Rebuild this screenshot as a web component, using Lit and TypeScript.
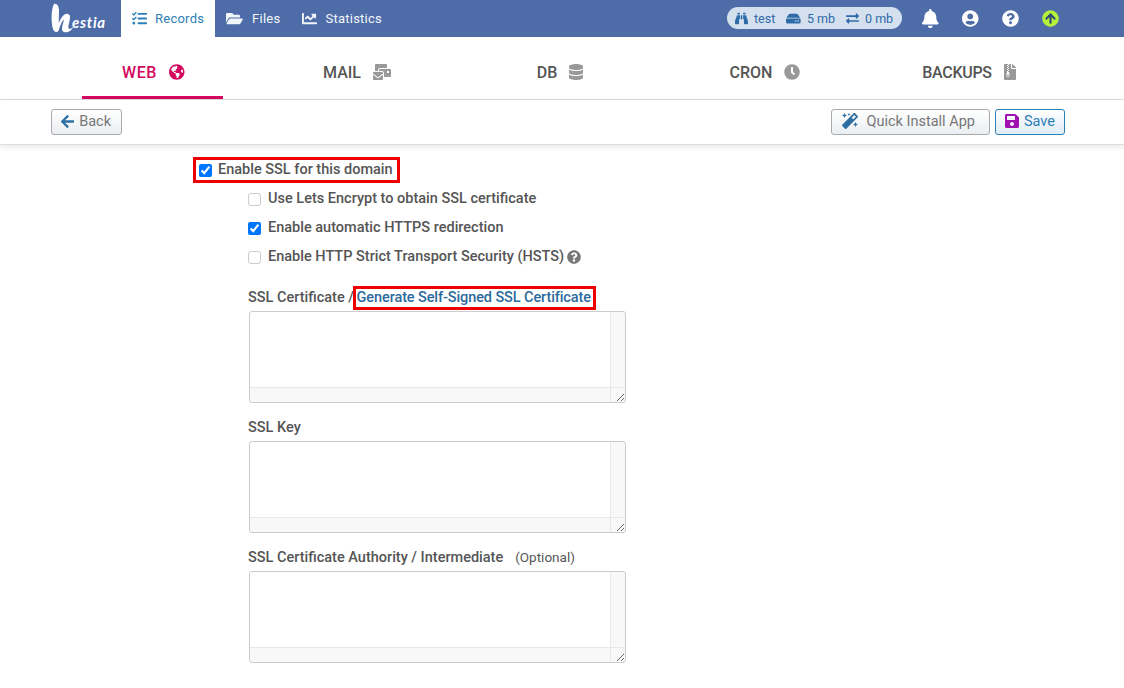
import { LitElement, html, css, svg } from "lit";
import { customElement } from "lit/decorators.js";

const P: Record<string, [number, string]> = {
  tasks: [512, "M139.61 35.5a12 12 0 0 0-17 0L58.93 98.81l-22.7-22.12a12 12 0 0 0-17 0L3.53 92.41a12 12 0 0 0 0 17l47.59 47.4a12.78 12.78 0 0 0 17.61 0l15.59-15.62L156.52 69a12.09 12.09 0 0 0 .09-17zm0 159.19a12 12 0 0 0-17 0l-63.68 63.72-22.7-22.1a12 12 0 0 0-17 0L3.53 252a12 12 0 0 0 0 17L51 316.5a12.77 12.77 0 0 0 17.6 0l15.7-15.69 72.2-72.22a12 12 0 0 0 .09-16.9zM64 368c-26.49 0-48.59 21.5-48.59 48S37.53 464 64 464a48 48 0 0 0 0-96zm432 16H208a16 16 0 0 0-16 16v32a16 16 0 0 0 16 16h288a16 16 0 0 0 16-16v-32a16 16 0 0 0-16-16zm0-320H208a16 16 0 0 0-16 16v32a16 16 0 0 0 16 16h288a16 16 0 0 0 16-16V80a16 16 0 0 0-16-16zm0 160H208a16 16 0 0 0-16 16v32a16 16 0 0 0 16 16h288a16 16 0 0 0 16-16v-32a16 16 0 0 0-16-16z"],
  folder: [576, "M572.694 292.093L500.27 416.248A63.997 63.997 0 0 1 444.989 448H45.025c-18.523 0-30.064-20.093-20.731-36.093l72.424-124.155A64 64 0 0 1 152 256h399.964c18.523 0 30.064 20.093 20.73 36.093zM152 224h328v-48c0-26.51-21.49-48-48-48H272l-64-64H48C21.49 64 0 85.49 0 112v278.046l69.077-118.418C86.214 242.25 117.989 224 152 224z"],
  chart: [512, "M496 384H64V80c0-8.84-7.16-16-16-16H16C7.16 64 0 71.16 0 80v336c0 17.67 14.33 32 32 32h464c8.84 0 16-7.16 16-16v-32c0-8.84-7.16-16-16-16zM464 96H345.94c-21.38 0-32.09 25.85-16.97 40.97l32.4 32.4L288 242.75l-73.37-73.37c-12.5-12.5-32.76-12.5-45.25 0l-68.69 68.69c-6.25 6.25-6.25 16.38 0 22.63l22.62 22.62c6.25 6.25 16.38 6.25 22.63 0L192 237.25l73.37 73.37c12.5 12.5 32.76 12.5 45.25 0l96-96 32.4 32.4c15.12 15.12 40.97 4.41 40.97-16.97V112c.01-8.84-7.15-16-16.01-16z"],
  binoculars: [512, "M416 48c0-8.84-7.16-16-16-16h-64c-8.84 0-16 7.16-16 16v48h96V48zM63.91 159.99C61.4 253.84 3.46 274.22 0 404v44c0 17.67 14.33 32 32 32h96c17.67 0 32-14.33 32-32V288h32V128H95.84c-17.63 0-31.45 14.37-31.93 31.99zm384.18 0c-.48-17.62-14.3-31.99-31.93-31.99H320v160h32v160c0 17.67 14.33 32 32 32h96c17.67 0 32-14.33 32-32v-44c-3.46-129.78-61.4-150.16-63.91-244.01zM176 32h-64c-8.84 0-16 7.16-16 16v48h96V48c0-8.84-7.16-16-16-16zm48 256h64V128h-64v160z"],
  hdd: [576, "M576 304v96c0 26.51-21.49 48-48 48H48c-26.51 0-48-21.49-48-48v-96c0-26.51 21.49-48 48-48h480c26.51 0 48 21.49 48 48zm-48-80a79.557 79.557 0 0 1 30.777 6.165L462.25 85.374A48.003 48.003 0 0 0 422.311 64H153.689a48 48 0 0 0-39.938 21.374L17.223 230.165A79.557 79.557 0 0 1 48 224h480zm-48 96c-17.673 0-32 14.327-32 32s14.327 32 32 32 32-14.327 32-32-14.327-32-32-32zm-96 0c-17.673 0-32 14.327-32 32s14.327 32 32 32 32-14.327 32-32-14.327-32-32-32z"],
  exchange: [512, "M0 168v-16c0-13.255 10.745-24 24-24h360V80c0-21.367 25.899-32.042 40.971-16.971l80 80c9.372 9.373 9.372 24.569 0 33.941l-80 80C409.956 272.014 384 261.456 384 240v-48H24c-13.255 0-24-10.745-24-24zm488 152H128v-48c0-21.314-25.862-32.08-40.971-16.971l-80 80c-9.372 9.373-9.372 24.569 0 33.941l80 80C102.057 463.997 128 453.437 128 432v-48h360c13.255 0 24-10.745 24-24v-16c0-13.255-10.745-24-24-24z"],
  bell: [448, "M224 512c35.32 0 63.97-28.65 63.97-64H160.03c0 35.35 28.65 64 63.97 64zm215.39-149.71c-19.32-20.76-55.47-51.99-55.47-154.29 0-77.7-54.48-139.9-127.94-155.16V32c0-17.67-14.32-32-31.98-32s-31.98 14.33-31.98 32v20.84C118.56 68.1 64.08 130.3 64.08 208c0 102.3-36.15 133.53-55.47 154.29-6 6.45-8.66 14.16-8.61 21.71.11 16.4 12.98 32 32.1 32h383.8c19.12 0 32-15.6 32.1-32 .05-7.55-2.61-15.27-8.61-21.71z"],
  user: [496, "M248 8C111 8 0 119 0 256s111 248 248 248 248-111 248-248S385 8 248 8zm0 96c48.6 0 88 39.4 88 88s-39.4 88-88 88-88-39.4-88-88 39.4-88 88-88zm0 344c-58.7 0-111.3-26.6-146.5-68.2 18.8-35.4 55.6-59.8 98.5-59.8 2.4 0 4.8.4 7.1 1.1 13 4.2 26.6 6.9 40.9 6.9 14.3 0 28-2.7 40.9-6.9 2.3-.7 4.7-1.1 7.1-1.1 42.9 0 79.7 24.4 98.5 59.8C359.3 421.4 306.7 448 248 448z"],
  help: [512, "M504 256c0 136.997-111.043 248-248 248S8 392.997 8 256C8 119.083 119.043 8 256 8s248 111.083 248 248zM262.655 90c-54.497 0-89.255 22.957-116.549 63.758-3.536 5.286-2.353 12.415 2.715 16.258l34.699 26.31c5.205 3.947 12.621 3.008 16.665-2.122 17.864-22.658 30.113-35.797 57.303-35.797 20.429 0 45.698 13.148 45.698 32.958 0 14.976-12.363 22.667-32.534 33.976C247.128 238.528 216 254.941 216 296v4c0 6.627 5.373 12 12 12h56c6.627 0 12-5.373 12-12v-1.333c0-28.462 83.186-29.647 83.186-106.667 0-58.002-60.165-102-116.531-102zM256 338c-25.365 0-46 20.635-46 46 0 25.364 20.635 46 46 46s46-20.636 46-46c0-25.365-20.635-46-46-46z"],
  up: [512, "M8 256C8 119 119 8 256 8s248 111 248 248-111 248-248 248S8 393 8 256zm143.6 28.9l72.4-75.5V392c0 13.3 10.7 24 24 24h16c13.3 0 24-10.7 24-24V209.4l72.4 75.5c9.3 9.7 24.8 9.9 34.3.4l10.9-11c9.4-9.4 9.4-24.6 0-33.9L273 107.7c-9.4-9.4-24.6-9.4-33.9 0L106.3 240.4c-9.4 9.4-9.4 24.6 0 33.9l10.9 11c9.6 9.5 25.1 9.3 34.4-.4z"],
  globe: [496, "M248 8C111.03 8 0 119.03 0 256s111.03 248 248 248 248-111.03 248-248S384.97 8 248 8zm82.29 357.6c-3.9 3.88-7.99 7.95-11.31 11.28-2.99 3-5.1 6.7-6.17 10.71-1.51 5.66-2.73 11.38-4.77 16.87l-17.39 46.85c-13.76 3-28 4.69-42.65 4.69v-27.38c1.69-12.62-7.64-36.26-22.63-51.25-6-6-9.37-14.14-9.37-22.63v-32.01c0-11.64-6.27-22.34-16.46-27.97-14.37-7.95-34.81-19.06-48.81-26.11-11.48-5.78-22.1-13.14-31.65-21.75l-.8-.72a114.792 114.792 0 0 1-18.06-20.74c-9.38-13.77-24.66-36.42-34.59-51.14 20.47-45.5 57.36-82.04 103.2-101.89l24.01 12.01C203.48 89.74 216 82.01 216 70.11v-11.3c7.99-1.29 16.12-2.11 24.39-2.42l28.3 28.3c6.25 6.25 6.25 16.38 0 22.63L264 112l-10.34 10.34c-3.12 3.12-3.12 8.19 0 11.31l4.69 4.69c3.12 3.12 3.12 8.19 0 11.31l-8 8a8.008 8.008 0 0 1-5.66 2.34h-8.99c-2.08 0-4.08.81-5.58 2.27l-9.92 9.65a8.008 8.008 0 0 0-1.58 9.31l15.59 31.19c2.66 5.32-1.21 11.58-7.15 11.58h-5.64c-1.93 0-3.79-.7-5.24-1.96l-9.28-8.06a16.017 16.017 0 0 0-15.55-3.1l-31.17 10.39a11.95 11.95 0 0 0-8.17 11.34c0 4.53 2.56 8.66 6.61 10.69l11.08 5.54c9.41 4.71 19.79 7.16 30.31 7.16s22.59 27.29 32 32h66.75c8.49 0 16.62 3.37 22.63 9.37l13.69 13.69a30.503 30.503 0 0 1 8.93 21.57 46.536 46.536 0 0 1-13.72 32.98zM417 274.25c-5.79-1.45-10.84-5-14.15-9.97l-17.98-26.97a23.97 23.97 0 0 1 0-26.62l19.59-29.38c2.32-3.47 5.5-6.29 9.24-8.15l12.98-6.49C440.2 193.59 448 223.87 448 256c0 8.67-.74 17.16-1.82 25.54L417 274.25z"],
  mail: [576, "M160 448c-25.6 0-51.2-22.4-64-32-64-44.8-83.2-60.8-96-70.4V480c0 17.67 14.33 32 32 32h256c17.67 0 32-14.33 32-32V345.6c-12.8 9.6-32 25.6-96 70.4-12.8 9.6-38.4 32-64 32zm128-192H32c-17.67 0-32 14.33-32 32v16c25.6 19.2 22.4 19.2 115.2 86.4 9.6 6.4 28.8 25.6 44.8 25.6s35.2-19.2 44.8-22.4c92.8-67.2 89.6-67.2 115.2-86.4V288c0-17.67-14.33-32-32-32zm256-96H224c-17.67 0-32 14.33-32 32v32h96c33.21 0 60.59 25.42 63.71 57.82l.29-.22V416h192c17.67 0 32-14.33 32-32V192c0-17.67-14.33-32-32-32zm-32 128h-64v-64h64v64zm-352-96c0-35.29 28.71-64 64-64h224V32c0-17.67-14.33-32-32-32H96C78.33 0 64 14.33 64 32v192h96v-32z"],
  db: [448, "M448 73.143v45.714C448 159.143 347.667 192 224 192S0 159.143 0 118.857V73.143C0 32.857 100.333 0 224 0s224 32.857 224 73.143zM448 176v102.857C448 319.143 347.667 352 224 352S0 319.143 0 278.857V176c48.125 33.143 136.208 48.572 224 48.572S399.874 209.143 448 176zm0 160v102.857C448 479.143 347.667 512 224 512S0 479.143 0 438.857V336c48.125 33.143 136.208 48.572 224 48.572S399.874 369.143 448 336z"],
  clock: [512, "M256,8C119,8,8,119,8,256S119,504,256,504,504,393,504,256,393,8,256,8Zm92.49,313h0l-20,25a16,16,0,0,1-22.49,2.5h0l-67-49.72a40,40,0,0,1-15-31.23V112a16,16,0,0,1,16-16h32a16,16,0,0,1,16,16V256l58,42.5A16,16,0,0,1,348.49,321Z"],
  zip: [384, "M377 105L279.1 7c-4.5-4.5-10.6-7-17-7H256v128h128v-6.1c0-6.3-2.5-12.4-7-16.9zM128.4 336c-17.9 0-32.4 12.1-32.4 27 0 15 14.6 27 32.5 27s32.4-12.1 32.4-27-14.6-27-32.5-27zM224 136V0h-63.6v32h-32V0H24C10.7 0 0 10.7 0 24v464c0 13.3 10.7 24 24 24h336c13.3 0 24-10.7 24-24V160H248c-13.2 0-24-10.8-24-24zM95.9 32h32v32h-32zm32.3 384c-33.2 0-58-30.4-51.4-62.9L96.4 256v-32h32v-32h-32v-32h32v-32h-32V96h32V64h32v32h-32v32h32v32h-32v32h32v32h-32v32h22.1c5.7 0 10.7 4.1 11.8 9.7l17.3 87.7c6.4 32.4-18.4 62.6-51.4 62.6z"],
  left: [448, "M257.5 445.1l-22.2 22.2c-9.4 9.4-24.6 9.4-33.9 0L7 273c-9.4-9.4-9.4-24.6 0-33.9L201.4 44.7c9.4-9.4 24.6-9.4 33.9 0l22.2 22.2c9.5 9.5 9.3 25-.4 34.3L136.6 216H424c13.3 0 24 10.7 24 24v32c0 13.3-10.7 24-24 24H136.6l120.5 114.8c9.8 9.3 10 24.8.4 34.3z"],
  magic: [512, "M224 96l16-32 32-16-32-16-16-32-16 32-32 16 32 16 16 32zM80 160l26.66-53.33L160 80l-53.34-26.67L80 0 53.34 53.33 0 80l53.34 26.67L80 160zm352 128l-26.66 53.33L352 368l53.34 26.67L432 448l26.66-53.33L512 368l-53.34-26.67L432 288zm70.62-193.77L417.77 9.38C411.53 3.12 403.34 0 395.15 0c-8.19 0-16.38 3.12-22.63 9.38L9.38 372.52c-12.5 12.5-12.5 32.76 0 45.25l84.85 84.85c6.25 6.25 14.44 9.37 22.62 9.37 8.19 0 16.38-3.12 22.63-9.37l363.14-363.15c12.5-12.48 12.5-32.75 0-45.24zM359.45 203.46l-50.91-50.91 86.6-86.6 50.91 50.91-86.6 86.6z"],
  save: [448, "M433.941 129.941l-83.882-83.882A48 48 0 0 0 316.118 32H48C21.49 32 0 53.49 0 80v352c0 26.51 21.49 48 48 48h352c26.51 0 48-21.49 48-48V163.882a48 48 0 0 0-14.059-33.941zM224 416c-35.346 0-64-28.654-64-64 0-35.346 28.654-64 64-64s64 28.654 64 64c0 35.346-28.654 64-64 64zm96-304.52V212c0 6.627-5.373 12-12 12H76c-6.627 0-12-5.373-12-12V108c0-6.627 5.373-12 12-12h228.52c3.183 0 6.235 1.264 8.485 3.515l3.48 3.48A11.996 11.996 0 0 1 320 111.48z"],
};

function icon(name: string, size: number, color: string) {
  const [w, d] = P[name];
  return html`<svg class="ic" width=${(size * w) / 512} height=${size} viewBox="0 0 ${w} 512" fill=${color} aria-hidden="true">${svg`<path d=${d}></path>`}</svg>`;
}

@customElement("app-root")
export class AppRoot extends LitElement {
  static styles = css`
    :host { display: block; font-family: "Roboto", "Open Sans", sans-serif; color: #555; font-size: 14.5px; background: #fff; }
    * { box-sizing: border-box; }
    .ic { display: block; flex: none; }
    .top { display: flex; align-items: stretch; height: 37px; background: #4e6ca8; padding-left: 50px; color: #fff; }
    .logo { width: 71px; display: flex; align-items: flex-end; flex: none; }
    .logo svg { display: block; margin-bottom: 4px; flex: none; }
    .logo span { font-family: "Lato", sans-serif; font-style: italic; font-weight: 700; font-size: 15px; color: #fff; margin-left: -2px; margin-bottom: 5px; letter-spacing: .7px; line-height: 20px; }
    .nav { display: flex; align-items: center; gap: 8px; padding: 0 11px; font-size: 13px; color: #f2f5fa; letter-spacing: .25px; white-space: nowrap; }
    .nav.on { background: #fff; color: #2d80b5; }
    .nav.files { gap: 9px; }
    .spacer { flex: 1; }
    .pill { align-self: flex-start; margin-top: 7px; display: flex; align-items: center; height: 22px; width: 175px; padding: 0 8px; border-radius: 11px; background: #d5e0ef; color: #2f6aa8; font-size: 12.5px; gap: 6px; white-space: nowrap; }
    .pill .g { margin-left: -1px; }
    .acts { display: flex; align-items: center; gap: 23px; padding: 0 65px 0 20px; }
    .a { width: 17px; display: flex; justify-content: center; }
    .tabs { display: grid; grid-template-columns: repeat(5, 1fr); height: 63px; padding: 0 52px; border-bottom: 1px solid #ddd; }
    .tab { justify-self: center; height: 62px; display: flex; align-items: center; justify-content: center; gap: 12px; padding: 8px 42px 0 40px; font-size: 16px; font-weight: 500; color: #555; }
    .tab.on { color: #d3085f; border-bottom: 3px solid #d3085f; padding: 11px 0 0 40px; width: 141px; justify-self: start; margin-left: 30px; justify-content: flex-start; letter-spacing: .6px; }
    .tab:nth-child(3) { padding-right: 44px; }
    .tab:nth-child(5) { letter-spacing: -.3px; }
    .bar { display: flex; align-items: center; height: 45px; padding: 0 59px 0 51px; gap: 5px; border-bottom: 1px solid #ddd; box-shadow: 0 2px 6px rgba(0,0,0,.1); }
    .btn { display: flex; align-items: center; height: 26px; border: 1px solid #aaa; border-radius: 3px; background: linear-gradient(#fff, #eaeef2); color: #777; padding: 0 10px 2px 9px; gap: 5px; font-size: 14.5px; white-space: nowrap; }
    .btn.quick { padding: 0 14px 2px 10px; gap: 8px; }
    .btn.save { border-color: #2d80b5; color: #2d80b5; background: linear-gradient(#fff, #e0edf6); padding: 0 9px 2px 9px; }
    .main { padding: 12px 0 0 193px; }
    .check { display: inline-flex; align-items: center; gap: 6px; height: 26px; padding: 0 4px 1px 3px; margin: 0; font-weight: 500; }
    input { margin: 1px 0 0; width: 13px; height: 13px; flex: none; }
    input:not(:checked) { appearance: none; border: 1px solid #ccc; border-radius: 3px; background: #fff; }
    .boxed { border: 3px solid #e00; }
    .sub { margin-left: 55px; display: flex; flex-direction: column; align-items: flex-start; }
    .row { display: flex; align-items: center; gap: 7px; height: 29px; font-weight: 500; }
    .row .ic { margin-left: -4px; }
    .first { margin-top: 1px; }
    .lab { height: 24px; display: flex; align-items: center; font-weight: 500; margin: 12px 0 2px; }
    .lab.cert { margin-top: 14px; }
    .lab a { color: #2c6a9c; text-decoration: none; letter-spacing: -.1px; }
    .lab .boxed { padding: 0 2px 1px 1px; margin-left: -5px; height: 24px; display: inline-flex; align-items: center; margin-top: 2px; }
    .lab small { font-size: 13.5px; font-weight: 400; margin-left: 12px; }
    textarea {
      display: block; width: 377px; height: 92px; border: 1px solid #ccc; border-radius: 3px; overflow: scroll; resize: both; margin: 0 0 0 1px; padding: 0; outline: none;
      background-color: #fff;
      background-image: linear-gradient(#e8e8e8, #e8e8e8), linear-gradient(#e8e8e8, #e8e8e8), linear-gradient(#f8f8f8, #f8f8f8), linear-gradient(#f8f8f8, #f8f8f8);
      background-repeat: no-repeat;
      background-position: right 14px top, left bottom 14px, right top, left bottom;
      background-size: 1px 100%, 100% 1px, 14px 100%, 100% 14px;
    }
  `;

  render() {
    const tabs: [string, string, string, boolean][] = [
      ["WEB", "globe", "#d3085f", true],
      ["MAIL", "mail", "#999", false],
      ["DB", "db", "#999", false],
      ["CRON", "clock", "#999", false],
      ["BACKUPS", "zip", "#999", false],
    ];
    return html`
      <div class="top">
        <div class="logo">
          <svg width="24" height="30" viewBox="0 0 24 30" fill="#fff"><path d="M4 1C7 0 9 3 9 8C9 13 8.500 17 9 20C11 15 14 10 18 11C21 12 20 15 19.500 18C19 21 18 23 18.500 25C19 26.500 21 26 23 24C22 28 17 30 14 29C11 28 12 23 13.500 19C14 17 13.500 16 12.500 18C10.500 21 9.500 25 8.500 28C6.500 30 4 29 3 26C1 20 1 6 4 1Z"></path></svg>
          <span>estia</span>
        </div>
        <div class="nav on">${icon("tasks", 15, "#2d80b5")}Records</div>
        <div class="nav files">${icon("folder", 15, "#f2f5fa")}Files</div>
        <div class="nav">${icon("chart", 15, "#f2f5fa")}Statistics</div>
        <div class="spacer"></div>
        <div class="pill">
          ${icon("binoculars", 13, "#2f6aa8")}<span>test</span>
          <span class="g"></span>${icon("hdd", 13, "#2f6aa8")}<span>5 mb</span>
          <span class="g"></span>${icon("exchange", 13, "#2f6aa8")}<span>0 mb</span>
        </div>
        <div class="acts">
          <span class="a">${icon("bell", 19, "#fff")}</span>
          <span class="a">${icon("user", 17, "#fff")}</span>
          <span class="a">${icon("help", 17, "#fff")}</span>
          <span class="a"><svg class="ic" width="17" height="17" viewBox="0 0 512 512"><circle cx="256" cy="256" r="170" fill="#2c4a78"></circle><path fill="#b5f03c" d=${P.up[1]}></path></svg></span>
        </div>
      </div>
      <div class="tabs">
        ${tabs.map(([t, i, c, on]) => html`<div class="tab ${on ? "on" : ""}">${t}${icon(i, 16, c)}</div>`)}
      </div>
      <div class="bar">
        <div class="btn">${icon("left", 15, "#2d6fa3")}Back</div>
        <div class="spacer"></div>
        <div class="btn quick">${icon("magic", 16, "#2d6fa3")}Quick Install App</div>
        <div class="btn save">${icon("save", 16, "#a010b0")}Save</div>
      </div>
      <div class="main">
        <label class="check boxed"><input type="checkbox" checked />Enable SSL for this domain</label>
        <div class="sub">
          <label class="row first"><input type="checkbox" />Use Lets Encrypt to obtain SSL certificate</label>
          <label class="row"><input type="checkbox" checked />Enable automatic HTTPS redirection</label>
          <label class="row"><input type="checkbox" />Enable HTTP Strict Transport Security (HSTS)${icon("help", 14, "#777")}</label>
          <div class="lab cert">SSL Certificate /&nbsp;<span class="boxed"><a href="#">Generate Self-Signed SSL Certificate</a></span></div>
          <textarea></textarea>
          <div class="lab">SSL Key</div>
          <textarea></textarea>
          <div class="lab">SSL Certificate Authority / Intermediate<small>(Optional)</small></div>
          <textarea></textarea>
        </div>
      </div>
    `;
  }
}
